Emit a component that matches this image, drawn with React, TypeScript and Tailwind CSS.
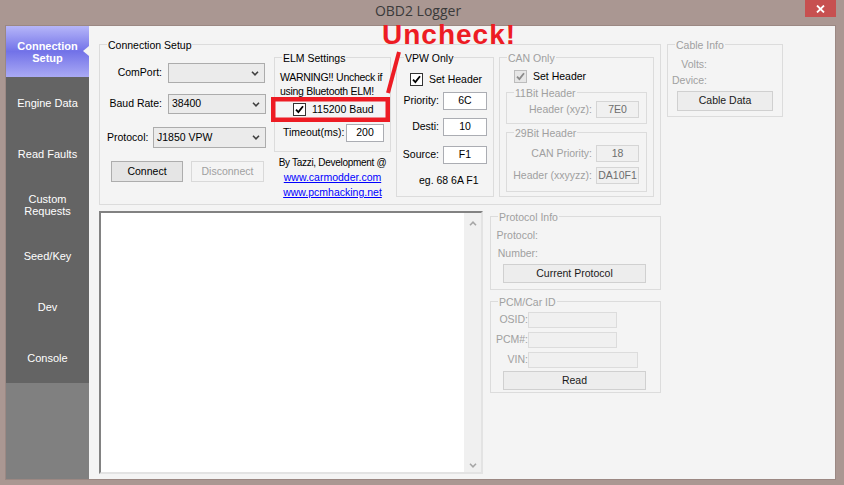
import type { ReactNode } from "react";

const GRAY = "text-[#a0a0a0]";

function GroupBox({
  title,
  disabled,
  className = "",
  children,
}: {
  title: string;
  disabled?: boolean;
  className?: string;
  children?: ReactNode;
}) {
  return (
    <div className={`border border-[#dcdcdc] ${className}`}>
      <div
        className={`-mt-[6px] ml-[7px] w-fit bg-[#f4f4f4] px-[1px] leading-[13px] ${
          disabled ? GRAY : "text-black"
        }`}
      >
        {title}
      </div>
      {children}
    </div>
  );
}

function Chevron({ up, color = "#404040" }: { up?: boolean; color?: string }) {
  return (
    <svg width="8" height="5" viewBox="0 0 8 5">
      <path
        d={up ? "M1 4.2l3-3 3 3" : "M1 0.8l3 3 3-3"}
        fill="none"
        stroke={color}
        strokeWidth="1.6"
      />
    </svg>
  );
}

function Select({ value, className = "" }: { value: string; className?: string }) {
  return (
    <div
      className={`flex items-center justify-between border border-[#acacac] bg-[#ebebeb] pl-[3px] pr-[5px] ${className}`}
    >
      <span>{value}</span>
      <Chevron />
    </div>
  );
}

function Check({ disabled }: { disabled?: boolean }) {
  return (
    <span
      className={`flex h-[13px] w-[13px] shrink-0 items-center justify-center border ${
        disabled ? "border-[#bcbcbc] bg-[#e6e6e6]" : "border-[#333333] bg-white"
      }`}
    >
      <svg width="9" height="9" viewBox="0 0 9 9">
        <path
          d="M1 4.6l2.4 2.5L8 1.2"
          fill="none"
          stroke={disabled ? "#8a8a8a" : "#000"}
          strokeWidth="1.8"
        />
      </svg>
    </span>
  );
}

function Field({
  value = "",
  disabled,
  className = "",
}: {
  value?: string;
  disabled?: boolean;
  className?: string;
}) {
  return (
    <div
      className={`flex items-center justify-center border ${
        disabled
          ? "border-[#d5d5d5] bg-[#f0f0f0] text-[#6d6d6d]"
          : "border-[#abadb3] bg-white text-black"
      } ${className}`}
    >
      {value}
    </div>
  );
}

function Btn({
  children,
  kind = "normal",
  className = "",
}: {
  children: ReactNode;
  kind?: "normal" | "soft" | "off";
  className?: string;
}) {
  const look =
    kind === "normal"
      ? "border-[#adadad] bg-[#e5e5e5] text-black"
      : kind === "soft"
        ? "border-[#d0d0d0] bg-[#ededed] text-[#1a1a1a]"
        : "border-[#d9d9d9] bg-[#f4f4f4] text-[#a0a0a0]";
  return (
    <div className={`flex items-center justify-center border ${look} ${className}`}>
      {children}
    </div>
  );
}

const tabs = ["Engine Data", "Read Faults", "Custom|Requests", "Seed/Key", "Dev", "Console"];

function Sidebar() {
  return (
    <div className="flex w-[83px] flex-col bg-[#808080] text-[11px]">
      <div className="relative flex h-[51px] items-center justify-center bg-[linear-gradient(to_bottom,#b6b6f9,#7272e8_50%,#aaaaf5)] text-center font-bold leading-[12px] text-white">
        Connection
        <br />
        Setup
        <span className="absolute right-0 top-[20px] h-0 w-0 border-y-[5px] border-r-[6px] border-y-transparent border-r-[#f4f4f4]" />
      </div>
      {tabs.map((t) => (
        <div
          key={t}
          className="flex h-[51px] items-center justify-center bg-[#646464] text-center leading-[12px] text-white"
        >
          <div>
            {t.split("|").map((line) => (
              <div key={line}>{line}</div>
            ))}
          </div>
        </div>
      ))}
    </div>
  );
}

function ConnectionSetup() {
  return (
    <GroupBox title="Connection Setup" className="h-[161px] w-[562px]">
      <div className="flex items-start">
        {/* left column */}
        <div className="w-[174px] pl-[7px]">
          <div className="mt-[11px] flex h-[20px] items-center">
            <span className="w-[55px] text-right">ComPort:</span>
            <Select value="" className="ml-[6px] h-[20px] w-[97px]" />
          </div>
          <div className="mt-[11px] flex h-[20px] items-center">
            <span className="w-[55px] text-right">Baud Rate:</span>
            <Select value="38400" className="ml-[6px] h-[20px] w-[98px]" />
          </div>
          <div className="mt-[13px] flex h-[21px] items-center">
            <span className="w-[46px]">Protocol:</span>
            <Select value="J1850 VPW" className="h-[21px] w-[113px]" />
          </div>
          <div className="mt-[13px] flex pl-[4px]">
            <Btn className="h-[21px] w-[72px]">Connect</Btn>
            <Btn kind="off" className="ml-[8px] h-[21px] w-[73px]">
              Disconnect
            </Btn>
          </div>
        </div>

        {/* ELM */}
        <div className="w-[117px]">
          <GroupBox title="ELM Settings" className="mt-[5px] h-[95px]">
            <div className="mt-[5px] pl-[5px] leading-[14px] tracking-[-0.3px]">
              WARNING!! Uncheck if
              <br />
              using Bluetooth ELM!
            </div>
            <div className="mt-[5px] flex h-[13px] items-center pl-[18px]">
              <Check />
              <span className="ml-[6px]">115200 Baud</span>
            </div>
            <div className="mt-[8px] flex items-center pl-[8px]">
              <span className="w-[63px]">Timeout(ms):</span>
              <Field value="200" className="h-[18px] w-[38px]" />
            </div>
          </GroupBox>
          <div className="mt-[3px] text-center leading-[15px]">
            <div className="text-[10px] tracking-[-0.3px]">By Tazzi, Development @</div>
            <div className="text-[#0000ff] underline">www.carmodder.com</div>
            <div className="text-[#0000ff] underline">www.pcmhacking.net</div>
          </div>
        </div>

        {/* VPW */}
        <GroupBox title="VPW Only" className="ml-[5px] mt-[5px] h-[140px] w-[98px]">
          <div className="mt-[8px] flex h-[13px] items-center pl-[13px]">
            <Check />
            <span className="ml-[6px]">Set Header</span>
          </div>
          <div className="mt-[6px] flex items-center">
            <span className="w-[42px] text-right">Priority:</span>
            <Field value="6C" className="ml-[4px] h-[18px] w-[44px]" />
          </div>
          <div className="mt-[8px] flex items-center">
            <span className="w-[42px] text-right">Desti:</span>
            <Field value="10" className="ml-[4px] h-[18px] w-[44px]" />
          </div>
          <div className="mt-[10px] flex items-center">
            <span className="w-[42px] text-right">Source:</span>
            <Field value="F1" className="ml-[4px] h-[18px] w-[44px]" />
          </div>
          <div className="mt-[9px] pl-[22px] leading-[14px]">eg. 68 6A F1</div>
        </GroupBox>

        {/* CAN */}
        <GroupBox title="CAN Only" disabled className="ml-[5px] mt-[5px] h-[140px] w-[155px]">
          <div className="mt-[5px] flex h-[13px] items-center pl-[14px]">
            <Check disabled />
            <span className="ml-[6px]">Set Header</span>
          </div>
          <GroupBox title="11Bit Header" disabled className="ml-[6px] mt-[9px] h-[32px] w-[141px]">
            <div className={`mt-[1px] flex items-center ${GRAY}`}>
              <span className="w-[85px] text-right">Header (xyz):</span>
              <Field value="7E0" disabled className="ml-[4px] h-[17px] w-[43px]" />
            </div>
          </GroupBox>
          <GroupBox title="29Bit Header" disabled className="ml-[6px] mt-[8px] h-[60px] w-[141px]">
            <div className={`mt-[5px] flex items-center ${GRAY}`}>
              <span className="w-[85px] text-right">CAN Priority:</span>
              <Field value="18" disabled className="ml-[4px] h-[17px] w-[43px]" />
            </div>
            <div className={`mt-[5px] flex items-center ${GRAY}`}>
              <span className="w-[85px] text-right">Header (xxyyzz):</span>
              <Field value="DA10F1" disabled className="ml-[4px] h-[17px] w-[43px]" />
            </div>
          </GroupBox>
        </GroupBox>
      </div>
    </GroupBox>
  );
}

function CableInfo() {
  return (
    <GroupBox title="Cable Info" disabled className="ml-[6px] h-[73px] w-[116px]">
      <div className={`mt-[5px] w-[39px] text-right leading-[14px] ${GRAY}`}>Volts:</div>
      <div className={`mt-[2px] w-[39px] text-right leading-[14px] ${GRAY}`}>Device:</div>
      <Btn kind="soft" className="ml-[9px] mt-[4px] h-[20px] w-[96px]">
        Cable Data
      </Btn>
    </GroupBox>
  );
}

function LogBox() {
  return (
    <div className="flex h-[263px] w-[384px] border-2 border-b-[#e3e3e3] border-l-[#828282] border-r-[#e3e3e3] border-t-[#828282] bg-white">
      <div className="flex-1" />
      <div className="flex w-[17px] flex-col items-center justify-between bg-[#f0f0f0] pb-[4px] pt-[8px]">
        <Chevron up color="#a6a6a6" />
        <Chevron color="#a6a6a6" />
      </div>
    </div>
  );
}

function SidePanels() {
  return (
    <div className="ml-[7px] mt-[5px] w-[171px]">
      <GroupBox title="Protocol Info" disabled className="h-[74px]">
        <div className={`mt-[4px] w-[47px] text-right leading-[14px] ${GRAY}`}>Protocol:</div>
        <div className={`mt-[4px] w-[47px] text-right leading-[14px] ${GRAY}`}>Number:</div>
        <Btn kind="soft" className="ml-[12px] mt-[4px] h-[19px] w-[143px]">
          Current Protocol
        </Btn>
      </GroupBox>
      <GroupBox title="PCM/Car ID" disabled className="mt-[11px] h-[92px]">
        <div className={`mt-[3px] flex items-center ${GRAY}`}>
          <span className="w-[37px] text-right">OSID:</span>
          <Field disabled className="h-[16px] w-[89px] border-[#dcdcdc]" />
        </div>
        <div className={`mt-[4px] flex items-center ${GRAY}`}>
          <span className="w-[37px] text-right">PCM#:</span>
          <Field disabled className="h-[16px] w-[89px] border-[#dcdcdc]" />
        </div>
        <div className={`mt-[4px] flex items-center ${GRAY}`}>
          <span className="w-[37px] text-right">VIN:</span>
          <Field disabled className="h-[16px] w-[110px] border-[#dcdcdc]" />
        </div>
        <Btn kind="soft" className="ml-[12px] mt-[3px] h-[19px] w-[143px]">
          Read
        </Btn>
      </GroupBox>
    </div>
  );
}

export default function App() {
  return (
    <div className="relative h-[485px] w-[844px] overflow-hidden whitespace-nowrap bg-[#aa9792] font-['Liberation_Sans',Arial,sans-serif] text-[10.5px] text-black">
      {/* title bar */}
      <div className="flex h-[25px]">
        <div className="flex-1" />
        <div className="pt-[1px] font-['Open_Sans',sans-serif] text-[14px] leading-[20px] text-[#3a3a3a]">
          OBD2 Logger
        </div>
        <div className="flex flex-1 justify-end pr-[8px]">
          <div className="flex h-[17px] w-[31px] items-center justify-center bg-[#c75050]">
            <svg width="9" height="8" viewBox="0 0 9 8">
              <path d="M1 0.5l7 7M8 0.5l-7 7" stroke="#fff" strokeWidth="1.8" />
            </svg>
          </div>
        </div>
      </div>

      {/* client */}
      <div className="ml-[5px] flex h-[455px] w-[831px] border border-[#9b8883]">
        <Sidebar />
        <div className="flex-1 bg-[#f4f4f4] pl-[10px] pt-[18px]">
          <div className="flex items-start">
            <ConnectionSetup />
            <CableInfo />
          </div>
          <div className="mt-[6px] flex items-start">
            <LogBox />
            <SidePanels />
          </div>
        </div>
      </div>

      {/* red annotation drawn over the screenshot */}
      <svg className="pointer-events-none absolute left-0 top-0" width="844" height="485">
        <rect x="273.25" y="99.25" width="114.5" height="20.5" fill="none" stroke="#ed1c24" strokeWidth="4.5" />
        <line x1="399" y1="52" x2="388" y2="93" stroke="#ed1c24" strokeWidth="4" />
      </svg>
      <div className="pointer-events-none absolute left-[382px] top-[21px] text-[28px] font-bold leading-[28px] tracking-[1px] text-[#ed1c24]">
        Uncheck!
      </div>
    </div>
  );
}
